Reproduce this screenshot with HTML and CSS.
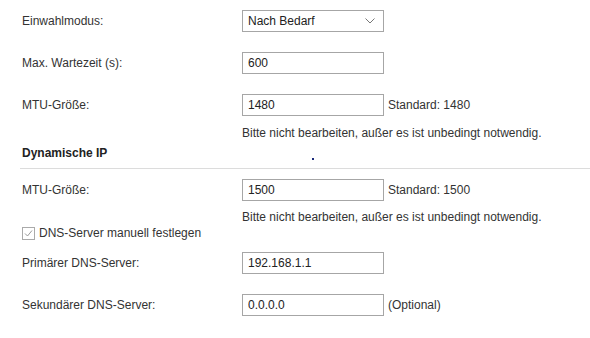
FILE: index.html
```html
<!DOCTYPE html>
<html lang="de">

<head>
    <meta charset="UTF-8">
    <meta name="viewport" content="width=device-width, initial-scale=1.0">
    <title>Internet-Einstellungen</title>
    <link rel="stylesheet" href="styles.css">
</head>

<body>
    <div class="form">
        <div class="row first">
            <label class="label">Einwahlmodus:</label>
            <div class="select">
                <span>Nach Bedarf</span>
                <svg class="chevron" width="10" height="6" viewBox="0 0 10 6">
                    <polyline points="0.5,0.5 5,5 9.5,0.5" fill="none" stroke="#777" stroke-width="1" />
                </svg>
            </div>
        </div>

        <div class="row">
            <label class="label">Max. Wartezeit (s):</label>
            <input type="text" value="600">
        </div>

        <div class="row">
            <label class="label">MTU-Größe:</label>
            <input type="text" value="1480">
            <span class="note">Standard: 1480</span>
        </div>
        <div class="hint">Bitte nicht bearbeiten, außer es ist unbedingt notwendig.</div>

        <div class="section">
            <h4 class="section-title">Dynamische IP</h4>
            <span class="dot"></span>
        </div>

        <div class="row after-line">
            <label class="label">MTU-Größe:</label>
            <input type="text" value="1500">
            <span class="note">Standard: 1500</span>
        </div>
        <div class="hint hint-2">Bitte nicht bearbeiten, außer es ist unbedingt notwendig.</div>

        <div class="check">
            <span class="box">
                <svg width="11" height="11" viewBox="0 0 11 11">
                    <polyline points="2,5.5 4.5,8 9,2.5" fill="none" stroke="#999" stroke-width="1" />
                </svg>
            </span>
            <span>DNS-Server manuell festlegen</span>
        </div>

        <div class="row dns">
            <label class="label">Primärer DNS-Server:</label>
            <input type="text" value="192.168.1.1">
        </div>

        <div class="row">
            <label class="label">Sekundärer DNS-Server:</label>
            <input type="text" value="0.0.0.0">
            <span class="note">(Optional)</span>
        </div>
    </div>
</body>

</html>
```

FILE: styles.css
```css
body {
    margin: 0;
    background: #fff;
    font-family: "Liberation Sans", Arial, sans-serif;
    font-size: 12px;
    color: #333;
}

.form {
    padding: 10px 0 0 20px;
}

.row {
    display: flex;
    align-items: center;
    height: 22px;
    margin-top: 20px;
    padding-left: 2px;
}

.row.first {
    margin-top: 0;
}

.label {
    width: 220px;
    flex-shrink: 0;
}

input,
.select {
    box-sizing: border-box;
    width: 142px;
    height: 22px;
    border: 1px solid #a6a6a6;
    padding: 0 5px;
    font-family: inherit;
    font-size: 12px;
    color: #222;
    background: #fff;
    outline: none;
}

.select {
    display: flex;
    align-items: center;
    justify-content: space-between;
    padding-right: 8px;
}

.note {
    margin-left: 4px;
}

.hint {
    margin-top: 10px;
    padding-left: 222px;
    line-height: 14px;
}

.hint-2 {
    margin-top: 9px;
}

.section {
    display: flex;
    margin-top: 6px;
    border-bottom: 1px solid #dcdcdc;
    padding: 0 0 8px 2px;
}

.section-title {
    width: 220px;
    margin: 0;
    font-size: 12px;
    line-height: 14px;
    font-weight: bold;
    color: #222;
}

.dot {
    width: 2px;
    height: 2px;
    margin-left: 70px;
    align-self: flex-end;
    background: #1a2a7a;
}

.row.after-line {
    margin-top: 10px;
}

.check {
    display: flex;
    align-items: center;
    gap: 4px;
    margin-top: 2px;
    padding-left: 2px;
    line-height: 14px;
}

.box {
    box-sizing: border-box;
    width: 13px;
    height: 13px;
    border: 1px solid #aaa;
    display: flex;
    align-items: center;
    justify-content: center;
}

.row.dns {
    margin-top: 12px;
}
```
